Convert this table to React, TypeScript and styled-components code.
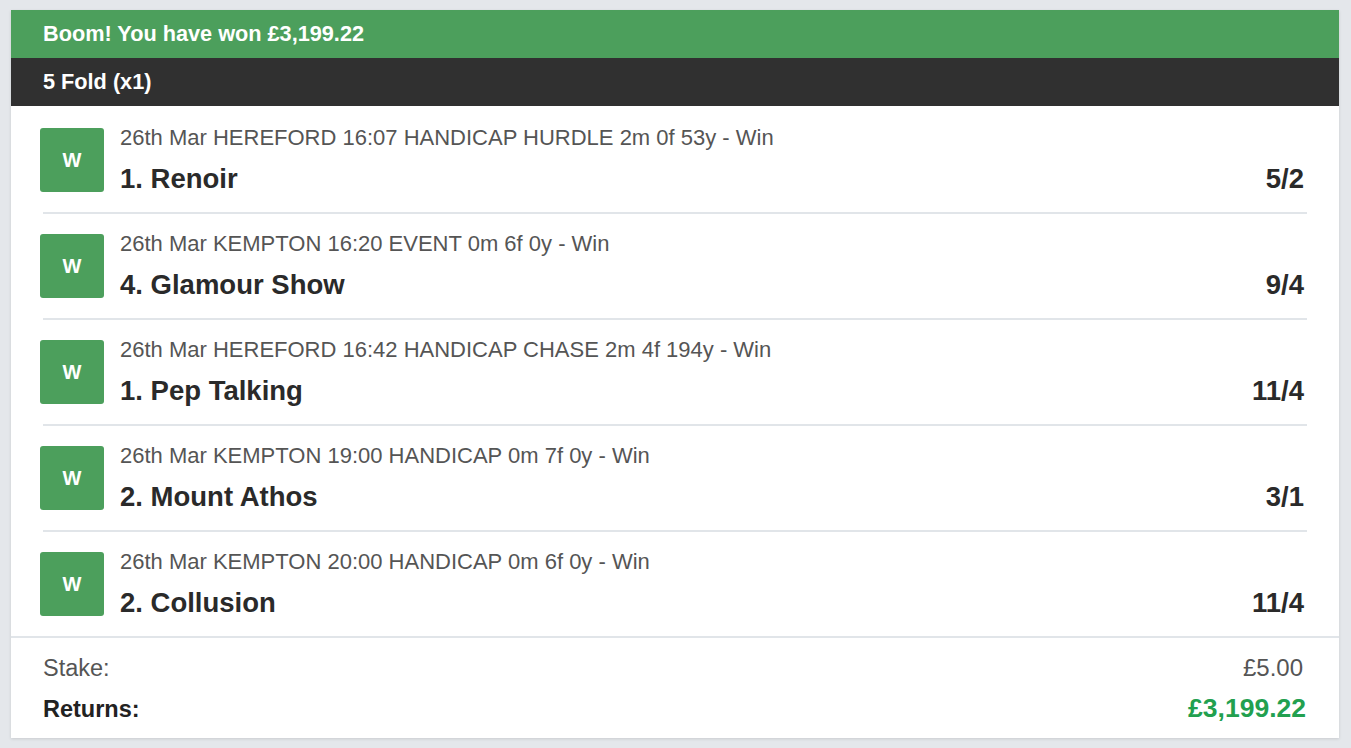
import React from "react";
import styled, { createGlobalStyle } from "styled-components";

const Global = createGlobalStyle`
  html, body {
    margin: 0;
    padding: 0;
    background: #e4e7eb;
    font-family: "Liberation Sans", Arial, Helvetica, sans-serif;
  }
`;

const Page = styled.div`
  padding: 10px 12px 10px 11px;
`;

const Card = styled.div`
  background: #ffffff;
  box-shadow: 0 1px 3px rgba(0, 0, 0, 0.12);
`;

const Banner = styled.div<{ $tone: "win" | "dark" }>`
  height: 48px;
  display: flex;
  align-items: center;
  padding: 0 32px;
  background: ${(p) => (p.$tone === "win" ? "#4c9f5c" : "#303030")};
  color: #ffffff;
  font-weight: 700;
  font-size: 21.7px;
`;

const List = styled.div`
  padding: 2px 32px 0;
  border-bottom: 2px solid #e1e5e9;
`;

const Row = styled.div<{ $last?: boolean }>`
  display: flex;
  gap: 16px;
  padding: 20px 3px 20px 0;
  border-bottom: ${(p) => (p.$last ? "none" : "2px solid #e1e5e9")};
`;

const Badge = styled.div`
  width: 64px;
  height: 64px;
  margin-left: -3px;
  flex: none;
  border-radius: 3px;
  background: #4c9f5c;
  color: #ffffff;
  font-weight: 700;
  font-size: 20px;
  display: flex;
  align-items: center;
  justify-content: center;
`;

const Info = styled.div`
  flex: 1;
  display: flex;
  flex-direction: column;
  justify-content: space-between;
`;

const Meta = styled.div`
  font-size: 22px;
  line-height: 20px;
  color: #555555;
`;

const SelectionLine = styled.div`
  display: flex;
  justify-content: space-between;
  align-items: baseline;
  font-size: 27.5px;
  line-height: 26px;
  font-weight: 700;
  color: #2a2a2a;
`;

const Footer = styled.div`
  padding: 15px 32px 14px;
  display: flex;
  flex-direction: column;
  gap: 10px;
`;

const FooterRow = styled.div<{ $strong?: boolean }>`
  display: flex;
  justify-content: space-between;
  align-items: baseline;
  line-height: 30px;
  font-size: 23.5px;
  color: ${(p) => (p.$strong ? "#222222" : "#555555")};
  font-weight: ${(p) => (p.$strong ? 700 : 400)};
`;

const Amount = styled.span<{ $win?: boolean }>`
  color: ${(p) => (p.$win ? "#22a04f" : "#555555")};
  font-size: ${(p) => (p.$win ? "26.5px" : "24px")};
  font-weight: ${(p) => (p.$win ? 700 : 400)};
  margin-right: ${(p) => (p.$win ? "1px" : "4px")};
`;

const legs = [
  { meta: "26th Mar HEREFORD 16:07 HANDICAP HURDLE 2m 0f 53y - Win", name: "1. Renoir", odds: "5/2" },
  { meta: "26th Mar KEMPTON 16:20 EVENT 0m 6f 0y - Win", name: "4. Glamour Show", odds: "9/4" },
  { meta: "26th Mar HEREFORD 16:42 HANDICAP CHASE 2m 4f 194y - Win", name: "1. Pep Talking", odds: "11/4" },
  { meta: "26th Mar KEMPTON 19:00 HANDICAP 0m 7f 0y - Win", name: "2. Mount Athos", odds: "3/1" },
  { meta: "26th Mar KEMPTON 20:00 HANDICAP 0m 6f 0y - Win", name: "2. Collusion", odds: "11/4" },
];

export default function App() {
  return (
    <Page>
      <Global />
      <Card>
        <Banner $tone="win">Boom! You have won £3,199.22</Banner>
        <Banner $tone="dark">5 Fold (x1)</Banner>
        <List>
          {legs.map((l, i) => (
            <Row key={i} $last={i === legs.length - 1}>
              <Badge>W</Badge>
              <Info>
                <Meta>{l.meta}</Meta>
                <SelectionLine>
                  <span>{l.name}</span>
                  <span>{l.odds}</span>
                </SelectionLine>
              </Info>
            </Row>
          ))}
        </List>
        <Footer>
          <FooterRow>
            <span>Stake:</span>
            <Amount>£5.00</Amount>
          </FooterRow>
          <FooterRow $strong>
            <span>Returns:</span>
            <Amount $win>£3,199.22</Amount>
          </FooterRow>
        </Footer>
      </Card>
    </Page>
  );
}
